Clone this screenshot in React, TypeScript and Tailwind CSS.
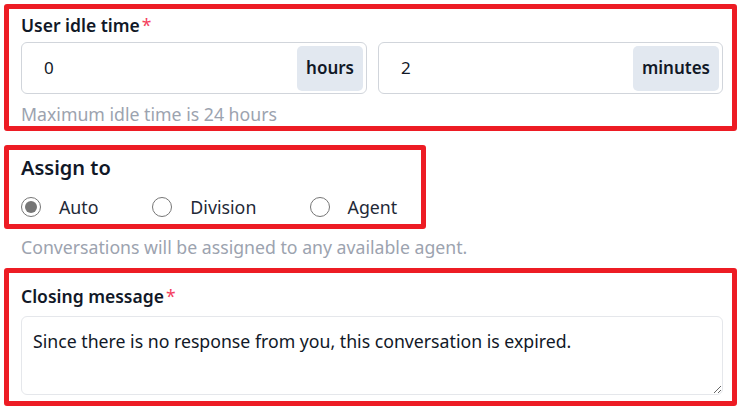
import React from "react";

const font = { fontFamily: '"Noto Sans", "Open Sans", sans-serif' };

function Radio({ checked, label, width }: { checked?: boolean; label: string; width: string }) {
  return (
    <div className={`flex items-center ${width}`}>
      <span className="flex h-[20px] w-[20px] items-center justify-center rounded-full border-[1.5px] border-[#767676] bg-white">
        {checked && <span className="h-[12px] w-[12px] rounded-full bg-[#767676]" />}
      </span>
      <span className="ml-[18px] text-[17.8px] text-[#1f2937]">{label}</span>
    </div>
  );
}

export default function App() {
  return (
    <div className="bg-white w-[745px] h-[412px] pl-[4px] pt-[4px] text-[#111827]" style={font}>
      <div className="w-[733px] h-[127px] border-[5px] border-[#ed1c24] rounded-[3px] pl-[12px] pr-[9px] pt-[3px]">
        <div className="flex items-center h-[26px] text-[17.5px] font-semibold">
          User idle time<span className="ml-[2px] text-[#f43f5e] font-normal">*</span>
        </div>
        <div className="mt-[4px] flex gap-[11px]">
          <div className="flex items-center w-[346px] h-[52px] border border-[#d1d5db] rounded-[6px] pl-[22px] pr-[3px]">
            <span className="flex-1 text-[17px]">0</span>
            <span className="flex items-center h-[45px] px-[9px] rounded-[5px] bg-[#e2e8f0] text-[17px] font-semibold">hours</span>
          </div>
          <div className="flex items-center w-[345px] h-[52px] border border-[#d1d5db] rounded-[6px] pl-[22px] pr-[3px]">
            <span className="flex-1 text-[17px]">2</span>
            <span className="flex items-center h-[45px] px-[9px] rounded-[5px] bg-[#e2e8f0] text-[17px] font-semibold">minutes</span>
          </div>
        </div>
        <div className="mt-[7px] text-[17.7px] text-[#9ca3af]">Maximum idle time is 24 hours</div>
      </div>

      <div className="mt-[14px] w-[422px] h-[84px] border-[5px] border-[#ed1c24] rounded-[3px] px-[12px] pt-[3px]">
        <div className="text-[20px] font-semibold h-[30px] flex items-center">Assign to</div>
        <div className="mt-[11px] flex items-center">
          <Radio checked label="Auto" width="w-[132px]" />
          <Radio label="Division" width="w-[158px]" />
          <Radio label="Agent" width="w-[100px]" />
        </div>
      </div>

      <div className="ml-[17px] mt-[5px] text-[17.7px] text-[#9ca3af] h-[26px] flex items-center">
        Conversations will be assigned to any available agent.
      </div>

      <div className="mt-[8px] w-[733px] h-[138px] border-[5px] border-[#ed1c24] rounded-[3px] pl-[12px] pr-[9px] pt-[10px]">
        <div className="flex items-center h-[26px] text-[17.5px] font-semibold">
          Closing message<span className="ml-[2px] text-[#f43f5e] font-normal">*</span>
        </div>
        <textarea
          readOnly
          className="mt-[7px] block w-[702px] h-[79px] border border-[#e5e7eb] rounded-[6px] px-[11px] pt-[11px] text-[17.7px] text-[#111827] outline-none resize-y"
          style={font}
          defaultValue="Since there is no response from you, this conversation is expired."
        />
      </div>
    </div>
  );
}
